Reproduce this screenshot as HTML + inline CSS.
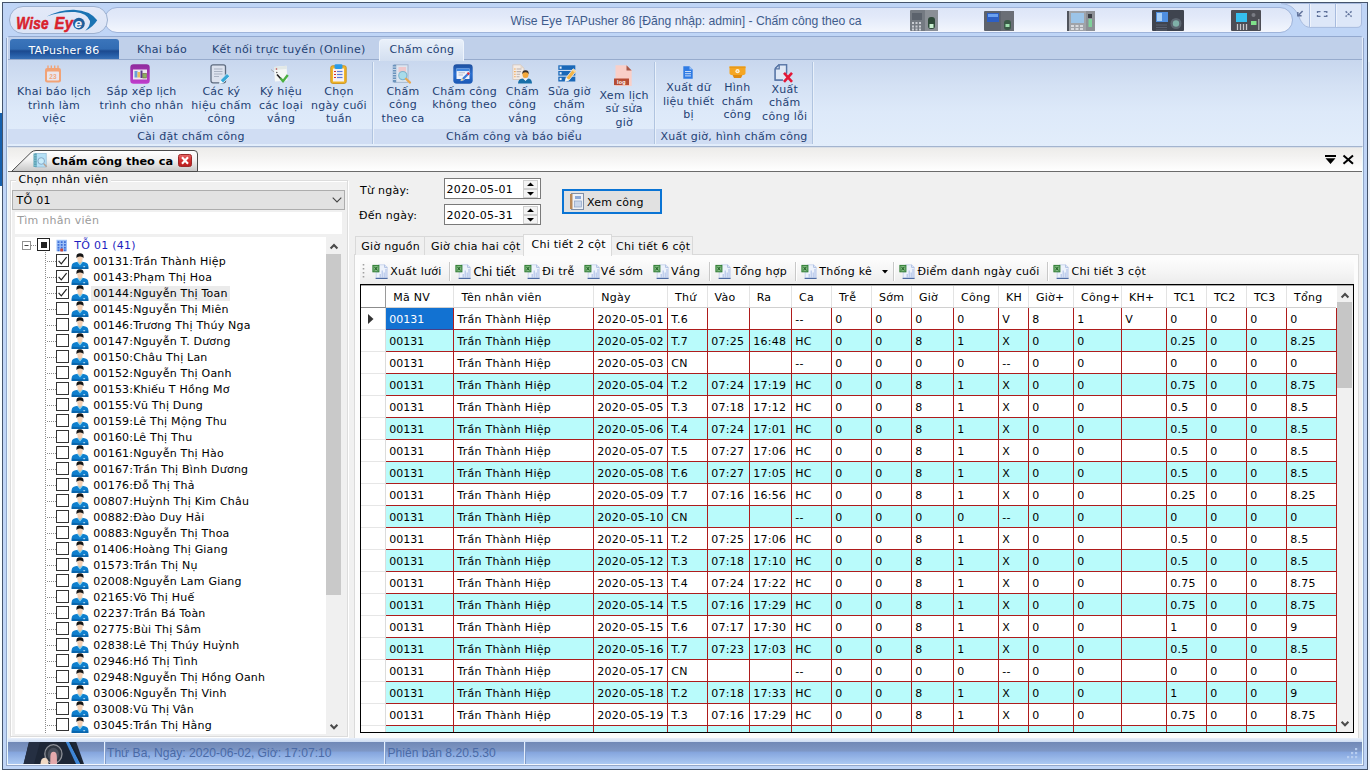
<!DOCTYPE html><html lang="vi"><head><meta charset="utf-8"><title>Wise Eye TAPusher 86</title><style>

*{box-sizing:border-box;margin:0;padding:0}
html,body{width:1370px;height:770px;overflow:hidden;background:#f8fefe}
body{position:relative;font-family:"DejaVu Sans", "Liberation Sans", sans-serif;font-size:11px;color:#000;line-height:14px;letter-spacing:0.26px}
.a{position:absolute}
.t{position:absolute;white-space:nowrap}
svg{position:absolute;overflow:visible}
#win{left:2px;top:2px;width:1366px;height:768px;border:1px solid #44546c;background:#bfd5f6}
#logo{left:9px;top:6px;width:99px;height:28px;border-radius:14px;border:1px solid #9db1d0;background:linear-gradient(#e3e9f8,#dce5f6)}
#title{left:104px;top:7px;width:1189px;height:26px;border-radius:13px;border:1px solid #9fb4da;background:linear-gradient(#dde5f7 0%,#e2e9f9 35%,#e9effb 65%,#f3f6fd 100%)}
#titletext{left:510.5px;top:13.5px;letter-spacing:0;font-family:"Liberation Sans",sans-serif;font-size:12.2px;color:#3f5c8c;line-height:14px}
#ribbon{left:7px;top:36px;width:1356px;height:111px;border:1px solid #e3edfa;border-top-color:#93a9cf;border-bottom-color:#a3b4cf;border-radius:3px 3px 0 0;background:#c0d0ea}
#rbody{left:8px;top:59px;width:1354px;height:87px;background:linear-gradient(#c8d7ee 0%,#d4e1f4 30%,#dde9f9 60%,#e2edfb 100%);border-top:1px solid #97abcd}
.rt{position:absolute;white-space:nowrap;color:#1e3f73;text-align:center;line-height:13.4px;transform:translateX(-50%)}
.gcap{position:absolute;height:15px;top:129px;background:#d0ddf3;color:#1e3f73;text-align:center;line-height:15.4px;white-space:nowrap}
.gsep{position:absolute;top:62px;width:2px;height:82px;border-left:1px solid #b0c4e0;border-right:1px solid #e8f0fa}
#content{left:8px;top:148px;width:1354px;height:590px;background:#f0f0f0}
#tabstrip{left:8px;top:147px;width:1354px;height:25px;background:linear-gradient(#c9d3e2 0,#edecea 1px,#f3f2f1 40%,#ffffff 100%);border-bottom:1px solid #6b6b6b}
#status{left:8px;top:742px;width:1354px;height:22px;background:linear-gradient(#7088b6 0%,#7e97c5 40%,#86a6de 48%,#abc9f2 100%)}
.st{letter-spacing:0;position:absolute;white-space:nowrap;font-family:"Liberation Sans",sans-serif;font-size:12.1px;color:#4a6aa6;top:746px;line-height:14px}

</style></head><body>
<div id="win" class="a"></div>
<div class="a" style="left:6px;top:38px;width:1358px;height:728px;border:1px solid #93a7c9;border-top:none"></div>
<div class="a" style="left:7px;top:38px;width:1356px;height:727px;border:1px solid #eafaff;border-top:none"></div>
<div class="a" style="left:0;top:113px;width:2px;height:73px;background:#1560ad"></div>
<div class="a" style="left:1368px;top:62px;width:2px;height:708px;background:#eef4fb"></div>
<div id="title" class="a"></div>
<div id="logo" class="a"></div>
<svg style="left:9px;top:6px" width="99" height="29" viewBox="9 6 99 29">
<path d="M46.8 16.6 Q60 9.4 74 9.7 Q90 10.4 97.2 20.3 Q93 27.2 85.3 30.8 Q90.6 25.5 90 21 Q87 13.2 75 12.1 Q60 11.4 46.8 16.6 Z" fill="#1a73b3"/>
<g font-family="'Liberation Sans',sans-serif" font-weight="bold" font-style="italic" font-size="17.3" fill="#d9222c" stroke="#d9222c" stroke-width="0.55" stroke-linejoin="round">
<text x="16.2" y="28.6" textLength="32.6" lengthAdjust="spacingAndGlyphs">Wise</text>
<text x="54.6" y="28.6" textLength="18.6" lengthAdjust="spacingAndGlyphs">Ey</text></g>
<circle cx="78.9" cy="23.6" r="5.9" fill="#1d5f9d"/>
<text x="74.6" y="27.6" font-family="'Liberation Sans',sans-serif" font-weight="bold" font-style="italic" font-size="13.5" fill="#eef3fb">e</text>
</svg>
<div id="titletext" class="t">Wise Eye TAPusher 86 [Đăng nhập: admin] - Chấm công theo ca</div>
<svg style="left:1275px;top:3px" width="90" height="28" viewBox="1275 3 90 28">
<path d="M1281 3.5 C1292 4.5 1296 10 1299 17 C1302 24 1305 27.4 1311 27.4 L1357 27.4 Q1361.5 27.4 1361.5 23 L1361.5 3.5 Z" fill="#dde7f8" stroke="#a7bbde" stroke-width="1"/>
<path d="M1309.5 4 V27 M1335.5 4 V27" stroke="#a7bbde" stroke-width="1"/><path d="M1310.5 4 V27 M1336.5 4 V27" stroke="#eef3fc" stroke-width="1"/>
<g stroke="#62749c" fill="none">
<path d="M1302.6 11 L1298.6 15" stroke-width="1.6"/><path d="M1297.8 12 V15.8 H1301.6" stroke-width="1.5"/>
<path d="M1317.5 13 V11.6 H1320.5 M1323.8 11.6 H1326.8 V13 M1326.8 15 V16.4 H1323.8 M1320.5 16.4 H1317.5 V15" stroke-width="1.3"/>
<path d="M1345.6 11.4 L1351.6 16.6 M1351.6 11.4 L1345.6 16.6" stroke-width="1.4" stroke-dasharray="2.2 1"/>
</g></svg>
<svg style="left:910px;top:10px" width="28" height="21" viewBox="0 0 28 21"><rect x="0" y="0" width="28" height="21" rx="1" fill="#747a82"/><rect x="2" y="3" width="10" height="7" fill="#5b626c"/><g fill="#c9ccd2"><rect x="2" y="12" width="2" height="2"/><rect x="5.5" y="12" width="2" height="2"/><rect x="9" y="12" width="2" height="2"/><rect x="2" y="15.5" width="2" height="2"/><rect x="5.5" y="15.5" width="2" height="2"/><rect x="9" y="15.5" width="2" height="2"/><rect x="2" y="18.5" width="2" height="2"/><rect x="5.5" y="18.5" width="2" height="2"/><rect x="9" y="18.5" width="2" height="2"/></g><rect x="15" y="0" width="13" height="21" fill="#8a8f96"/><rect x="18" y="7" width="7" height="12" rx="3" fill="#2f4a3a"/><rect x="19.5" y="14" width="4" height="4" fill="#c8f0d0"/></svg>
<svg style="left:984px;top:11px" width="30" height="20" viewBox="0 0 30 20"><rect x="0" y="0" width="30" height="20" rx="1" fill="#5d626c"/><rect x="3" y="2" width="12" height="9" fill="#2d5fc4"/><rect x="4" y="3" width="10" height="3" fill="#6aa0f0"/><rect x="17" y="0" width="13" height="20" fill="#6a6e76"/><rect x="20" y="9" width="7" height="10" rx="3" fill="#3a5a48"/><rect x="21.5" y="13" width="4" height="3" fill="#9fe0b0"/></svg>
<svg style="left:1067px;top:11px" width="28" height="20" viewBox="0 0 28 20"><rect x="0" y="0" width="28" height="20" rx="1" fill="#a0a3a9"/><rect x="0" y="0" width="2" height="20" fill="#50545c"/><rect x="4" y="2" width="13" height="10" fill="#9cc4e8"/><g fill="#d8dadf"><rect x="4" y="14" width="3" height="2"/><rect x="8.5" y="14" width="3" height="2"/><rect x="13" y="14" width="3" height="2"/><rect x="4" y="17" width="3" height="2"/><rect x="8.5" y="17" width="3" height="2"/><rect x="13" y="17" width="3" height="2"/></g><rect x="19" y="0" width="9" height="20" fill="#8d9096"/><rect x="21" y="3" width="4" height="4" fill="#3a3d44"/><rect x="21.5" y="8" width="3.5" height="8" fill="#7fd09a"/></svg>
<svg style="left:1152px;top:10px" width="32" height="21" viewBox="0 0 32 21"><rect x="0" y="0" width="32" height="21" rx="1" fill="#3f444f"/><rect x="4" y="2" width="12" height="10" fill="#4f8fe0"/><rect x="5" y="3" width="5" height="8" fill="#a8d0f8"/><circle cx="24" cy="13.5" r="5.5" fill="#5b6570"/><circle cx="24" cy="13.5" r="3.2" fill="#7fb0a8"/><g stroke="#5a6070" stroke-width="1"><path d="M4 15 H15 M4 17.5 H15 M4 20 H15"/></g></svg>
<svg style="left:1231px;top:10px" width="30" height="21" viewBox="0 0 30 21"><rect x="0" y="0" width="30" height="21" rx="1" fill="#4c4d54"/><rect x="5" y="3" width="11" height="9" fill="#35c0f0"/><g stroke="#c8c8cc" stroke-width="1.3"><path d="M6.5 14 V20 M9.5 14 V20 M12.5 14 V20 M15.5 14 V20"/></g><circle cx="22.5" cy="5" r="2" fill="#7a7c84"/><rect x="20" y="11" width="5.5" height="4" fill="#7fe08a"/><rect x="27" y="9" width="1.5" height="11" fill="#9a9ca2"/></svg>
<div id="ribbon" class="a"></div><div id="rbody" class="a"></div>
<div class="a" style="left:10px;top:39px;width:109px;height:20px;border-radius:3px 3px 0 0;background:linear-gradient(#3b75bb 0%,#326cb3 50%,#1c4a8f 60%,#245aa3 78%,#3870b6 100%)"></div>
<div class="t" style="left:28.4px;top:43.8px;color:#fff">TAPusher 86</div>
<div class="t" style="left:137px;top:43px;color:#1e3f73">Khai báo</div>
<div class="t" style="left:212px;top:43px;color:#1e3f73">Kết nối trực tuyến (Online)</div>
<div class="a" style="left:379px;top:39px;width:85px;height:22px;border-radius:4px 4px 0 0;background:linear-gradient(#e9f0fa,#d3dff0);border:1px solid #eef4fc;border-bottom:none"></div>
<div class="t" style="left:389.5px;top:43px;color:#1e3f73">Chấm công</div>
<div class="gcap" style="left:8px;width:364px;padding-left:2px">Cài đặt chấm công</div>
<div class="gcap" style="left:374px;width:280px">Chấm công và báo biểu</div>
<div class="gcap" style="left:656px;width:156px">Xuất giờ, hình chấm công</div>
<div class="gsep" style="left:372px"></div>
<div class="gsep" style="left:654px"></div>
<div class="gsep" style="left:812px"></div>
<div class="rt" style="left:54px;top:85.4px">Khai báo lịch<br>trình làm<br>việc</div>
<div class="rt" style="left:141.5px;top:85.4px">Sắp xếp lịch<br>trình cho nhân<br>viên</div>
<div class="rt" style="left:221.4px;top:85.4px">Các ký<br>hiệu chấm<br>công</div>
<div class="rt" style="left:281px;top:85.4px">Ký hiệu<br>các loại<br>vắng</div>
<div class="rt" style="left:339px;top:85.4px">Chọn<br>ngày cuối<br>tuần</div>
<div class="rt" style="left:403px;top:84.9px">Chấm<br>công<br>theo ca</div>
<div class="rt" style="left:464.6px;top:84.9px">Chấm công<br>không theo<br>ca</div>
<div class="rt" style="left:522.3px;top:84.9px">Chấm<br>công<br>vắng</div>
<div class="rt" style="left:569.3px;top:84.9px">Sửa giờ<br>chấm<br>công</div>
<div class="rt" style="left:624.2px;top:88.9px">Xem lịch<br>sử sửa<br>giờ</div>
<div class="rt" style="left:688.6px;top:81.4px">Xuất dữ<br>liệu thiết<br>bị</div>
<div class="rt" style="left:737.4px;top:81.10000000000001px">Hình<br>chấm<br>công</div>
<div class="rt" style="left:784.7px;top:82.9px">Xuất<br>chấm<br>công lỗi</div>
<svg style="left:44px;top:65px" width="18" height="18" viewBox="0 0 18 18"><rect x="1" y="3" width="16" height="14.5" rx="2.2" fill="#f1a377"/><rect x="3" y="6.5" width="12" height="9" rx="0.8" fill="#e9e6ee"/><g stroke="#f1a377" stroke-width="1.4"><path d="M4 0.5 V4 M7.3 0.5 V4 M10.7 0.5 V4 M14 0.5 V4"/></g><text x="9" y="13.8" font-size="6.5" font-family="'Liberation Sans',sans-serif" font-weight="bold" text-anchor="middle" fill="#f0a880">23</text></svg>
<svg style="left:130px;top:64px" width="20" height="20" viewBox="0 0 20 20"><defs><linearGradient id="pg" x1="0" y1="0" x2="0" y2="1"><stop offset="0" stop-color="#8f2c9c"/><stop offset="1" stop-color="#c03ccc"/></linearGradient></defs><rect x="0.3" y="0.3" width="19.4" height="19.4" rx="3.2" fill="url(#pg)"/><rect x="3" y="5.5" width="14" height="10" fill="#eee6f2"/><rect x="4.5" y="7" width="3" height="6.5" fill="#6a9fd8"/><rect x="7.5" y="8" width="2.5" height="5.5" fill="#e8c060"/><rect x="10.5" y="6.5" width="2" height="7.5" fill="#5a3a8a"/><rect x="12.8" y="9.5" width="3.5" height="4.5" fill="#8ab060" stroke="#6a5a3a" stroke-width="0.6"/></svg>
<svg style="left:210px;top:64px" width="20" height="20" viewBox="0 0 20 20"><rect x="1" y="0.8" width="14.5" height="18" rx="2" fill="#dce2ee" stroke="#5c6a7e" stroke-width="1.3"/><g stroke="#a9b2c2" stroke-width="1"><path d="M4 5 H12.5 M4 7.5 H12.5 M4 10 H12.5 M4 12.5 H9"/></g><path d="M9.5 19.5 L10.5 16 L17 9.5 L19.8 12.2 L13.2 18.7 Z" fill="#38a8d8" stroke="#e6f2fa" stroke-width="0.8"/><path d="M9.5 19.5 L10.5 16 L13.2 18.7 Z" fill="#f4f8fc"/></svg>
<svg style="left:270px;top:65px" width="20" height="18" viewBox="0 0 20 18"><path d="M4 2 L16.5 0.8 L17.5 15.5 L5 16.5 Z" fill="#f6f8f6"/><path d="M4 2 L16.5 0.8 L16.8 4 L4.2 5 Z" fill="#e2e8e6"/><path d="M1 4.5 L4 7" stroke="#999" stroke-width="0.8"/><circle cx="6.5" cy="4" r="0.8" fill="#c04040"/><circle cx="6.8" cy="7.5" r="0.8" fill="#555"/><path d="M7 9.5 L10.8 13.8" stroke="#222" stroke-width="1.6"/><path d="M10.5 13.2 L13 16.2 L17.8 10" fill="none" stroke="#4bb040" stroke-width="2.4"/></svg>
<svg style="left:330px;top:64px" width="17" height="20" viewBox="0 0 17 20"><rect x="0.8" y="1.8" width="15.4" height="17.6" rx="1.8" fill="#f0b62c" stroke="#c88c14" stroke-width="0.9"/><rect x="3" y="4.5" width="11" height="13" fill="#f6f2f6"/><rect x="4.5" y="0.3" width="8" height="4.6" rx="1.3" fill="#2a9ae8"/><g stroke-width="1.2"><path d="M4 7.5 H6" stroke="#d03030"/><path d="M7 7.5 H12.5" stroke="#5878d8"/><path d="M4 10.5 H6" stroke="#d03030"/><path d="M7 10.5 H12.5" stroke="#5878d8"/><path d="M4 13.5 H6" stroke="#d03030"/><path d="M7 13.5 H12.5" stroke="#5878d8"/></g></svg>
<svg style="left:392px;top:64px" width="20" height="20" viewBox="0 0 20 20"><rect x="2.5" y="0.8" width="13.5" height="17.5" fill="#dde5f0" stroke="#9fb2cc" stroke-width="0.9"/><rect x="0.8" y="0.8" width="3.4" height="17.5" fill="#6b93bd"/><g stroke="#dfe8f2" stroke-width="0.8"><path d="M0.8 3 H4.2 M0.8 5.5 H4.2 M0.8 8 H4.2 M0.8 10.5 H4.2 M0.8 13 H4.2 M0.8 15.5 H4.2"/></g><rect x="6.5" y="3" width="7.5" height="5" fill="#efc8cc"/><circle cx="10.8" cy="11.6" r="4.1" fill="#a8dcea" stroke="#7fb4cc" stroke-width="1.1"/><path d="M14 14.8 L18 18.6" stroke="#e8a850" stroke-width="2.2" stroke-linecap="round"/></svg>
<svg style="left:453px;top:64px" width="20" height="20" viewBox="0 0 20 20"><defs><linearGradient id="bg2" x1="0" y1="0" x2="0" y2="1"><stop offset="0" stop-color="#1e4f9e"/><stop offset="0.5" stop-color="#2a6fd0"/><stop offset="1" stop-color="#1b58b4"/></linearGradient></defs><rect x="0.3" y="0.3" width="19.4" height="19.4" rx="3.4" fill="url(#bg2)"/><rect x="3.5" y="4.5" width="13" height="10.5" fill="#f2f4fa"/><rect x="3.5" y="4.5" width="13" height="2.6" fill="#3f86e0"/><path d="M5.5 8.8 H12 M5.5 11 H10" stroke="#aab6cc" stroke-width="0.9"/><path d="M7.8 16.8 L9 14 L15.2 8 L17 9.8 L10.8 16 Z" fill="#3d7ad8" stroke="#fff" stroke-width="0.5"/><path d="M13.8 9.4 L15.2 8 L17 9.8 L15.6 11.2 Z" fill="#e03040"/><path d="M7.8 16.8 L9 14 L10.8 16 Z" fill="#f0d890"/></svg>
<svg style="left:511.5px;top:64px" width="20" height="20" viewBox="0 0 20 20"><path d="M0.8 0.8 H8.5 L12 4.2 V15.5 H0.8 Z" fill="#f4ece6" stroke="#cfc4bc" stroke-width="0.8"/><path d="M8.5 0.8 V4.2 H12" fill="#e2d6cc"/><g stroke-width="1.1"><path d="M2.2 5 H3.6 M2.2 7.6 H3.6 M2.2 10.2 H3.6 M2.2 12.8 H3.6" stroke="#f0a040"/><path d="M4.6 5 H9.5 M4.6 7.6 H9 M4.6 10.2 H8 M4.6 12.8 H7.5" stroke="#b8b0b0"/></g><path d="M6 19.6 Q6 15 10.5 14.4 L13.5 16.5 L16.5 14.4 Q20 15 20 19.6 Z" fill="#186fa8"/><path d="M11.5 14.5 L13.5 17 L15.5 14.5 Z" fill="#f4f4f4"/><ellipse cx="13.5" cy="10.6" rx="3" ry="3.5" fill="#f4a83a"/><path d="M10.3 10.2 Q10 6 13.5 6.2 Q17 6 16.7 10.2 Q16 8 13.5 8.2 Q11 8 10.3 10.2 Z" fill="#3a3028"/></svg>
<svg style="left:558px;top:65px" width="18" height="17" viewBox="0 0 18 17"><rect x="0.3" y="0.3" width="17" height="4.6" fill="#1a68b8"/><rect x="0.3" y="6" width="17" height="4.6" fill="#1a68b8"/><rect x="0.3" y="11.7" width="17" height="4.8" fill="#1a68b8"/><rect x="1.6" y="1.5" width="2" height="2.2" fill="#e8f0fa"/><rect x="1.6" y="7.2" width="2" height="2.2" fill="#e8f0fa"/><rect x="1.6" y="12.9" width="2" height="2.2" fill="#e8f0fa"/><path d="M7.2 16.4 L8.2 12.6 L15.2 3.8 L18.2 6.2 L11.2 15 Z" fill="#f3b548" stroke="#dce6f4" stroke-width="0.9"/><path d="M7.2 16.4 L8.2 12.6 L11.2 15 Z" fill="#f6f6f6"/><path d="M14 5.3 L15.2 3.8 L18.2 6.2 L17 7.7 Z" fill="#f8d8a0"/></svg>
<svg style="left:614px;top:64.5px" width="18" height="22" viewBox="0 0 18 22"><path d="M1.5 0.3 H12.5 L17.7 5.6 V21 H1.5 Z" fill="#f9cfc8"/><path d="M12.5 0.3 L17.7 5.6 H12.5 Z" fill="#a85848"/><rect x="0" y="13.5" width="15" height="6.6" fill="#b54c34"/><text x="7.5" y="18.6" font-size="5.4" font-family="'Liberation Sans',sans-serif" font-weight="bold" text-anchor="middle" fill="#fff">log</text></svg>
<svg style="left:682.5px;top:66px" width="10" height="13" viewBox="0 0 10 13"><path d="M0.3 0.3 H6.5 L9.7 3.5 V12.7 H0.3 Z" fill="#2f7be4"/><path d="M6.5 0.3 V3.5 H9.7 Z" fill="#9cc2f6"/><path d="M2 5.5 H8 M2 7.7 H8 M2 9.9 H8" stroke="#dbe8fb" stroke-width="0.9"/></svg>
<svg style="left:729px;top:66px" width="17" height="12" viewBox="0 0 17 12"><path d="M0.5 0.5 H16.5 V7 Q16.5 9 13.5 9 L3.5 9 Q0.5 9 0.5 7 Z" fill="#f5a623"/><path d="M3.5 9 L13.5 9 L12 12 H5 Z" fill="#e08a10"/><rect x="0.5" y="0.5" width="16" height="1.6" fill="#e89a1a"/><circle cx="8.5" cy="5.2" r="2.1" fill="#fdf2dc"/><circle cx="8.5" cy="5.2" r="0.9" fill="#f5c46a"/></svg>
<svg style="left:773.5px;top:64.3px" width="19" height="19" viewBox="0 0 19 19"><path d="M1.2 4.5 L5 0.8 H12.5 V9 M1.2 4.5 V16 H8.5" fill="none" stroke="#5876a6" stroke-width="1.4"/><path d="M1.2 4.5 L5 0.8 H12.5 V16 H1.2 Z" fill="#dfe8f6"/><path d="M1.2 4.5 L5 0.8 H12.5 V10 M1.2 4.5 V16 H9 M1.2 4.8 H5.2 V0.8" fill="none" stroke="#5876a6" stroke-width="1.3"/><path d="M10 8.8 L18 17.8 M18 8.8 L10 17.8" stroke="#e31837" stroke-width="2.6"/></svg>
<div id="content" class="a"></div><div id="tabstrip" class="a"></div>
<svg style="left:8px;top:148px" width="200" height="25" viewBox="8 148 200 25">
<defs><linearGradient id="dtg" x1="0" y1="0" x2="0" y2="1"><stop offset="0" stop-color="#ffffff"/><stop offset="0.45" stop-color="#f2f2f2"/><stop offset="1" stop-color="#c6c6c6"/></linearGradient></defs>
<path d="M11.5 171.5 L31 152.5 Q33 150.5 36 150.5 L194 150.5 Q197.5 150.5 197.5 154 L197.5 171.5 Z" fill="url(#dtg)" stroke="#4a4a4a" stroke-width="1"/>
</svg>
<svg style="left:33px;top:153px" width="15" height="15" viewBox="0 0 15 15"><rect x="2.6" y="0.4" width="10.6" height="13.6" fill="#b4e0f6" stroke="#8fb8d4" stroke-width="0.7"/><rect x="0.5" y="0.4" width="3.3" height="13.6" fill="#5fa5b8"/><path d="M0.5 2.5 H3.8 M0.5 5 H3.8 M0.5 7.5 H3.8 M0.5 10 H3.8 M0.5 12.5 H3.8" stroke="#8cc4d2" stroke-width="0.7"/><circle cx="8.2" cy="8" r="3.3" fill="#c8ecfa" stroke="#86a8c8" stroke-width="1"/><path d="M10.8 10.8 L13.6 13.8" stroke="#b8a090" stroke-width="1.5"/></svg>
<div class="t" style="left:51.8px;top:154.5px;font-weight:bold;font-size:11.3px;letter-spacing:0">Chấm công theo ca</div>
<svg style="left:178px;top:154px" width="14" height="13" viewBox="0 0 14 13"><defs><linearGradient id="cbg" x1="0" y1="0" x2="0" y2="1"><stop offset="0" stop-color="#e86a6a"/><stop offset="0.5" stop-color="#d22f2f"/><stop offset="1" stop-color="#b81e1e"/></linearGradient></defs>
<rect x="0.5" y="0.5" width="13" height="12" rx="2" fill="url(#cbg)" stroke="#9c2a2a"/><path d="M4 3.2 L10 9.8 M10 3.2 L4 9.8" stroke="#fff" stroke-width="2.1" stroke-linecap="butt"/></svg>
<div class="a" style="left:10px;top:180px;width:338px;height:557px;border:1px solid #dcdcdc;box-shadow:1px 1px 0 #fff, inset 1px 1px 0 #fff"></div>
<div class="t" style="left:16px;top:173px;background:#f0f0f0;padding:0 2.5px">Chọn nhân viên</div>
<div class="a" style="left:12px;top:190px;width:333px;height:20px;background:#e2e2e2;border:1px solid #adadad"></div>
<div class="t" style="left:16.5px;top:194px">TỖ 01</div>
<svg style="left:331.5px;top:197px" width="10" height="6" viewBox="0 0 10 6"><path d="M0.7 0.7 L5 5 L9.3 0.7" fill="none" stroke="#444" stroke-width="1.1"/></svg>
<div class="a" style="left:15px;top:212px;width:327px;height:22px;background:#fff"></div>
<div class="t" style="left:17.3px;top:213.5px;color:#9b9b9b">Tìm nhân viên</div>
<div class="a" style="left:15px;top:237px;width:328px;height:497px;background:#fff"></div>
<div class="a" style="left:326px;top:237px;width:17px;height:497px;background:#f0f0f0"></div>
<div class="a" style="left:326px;top:254px;width:15px;height:341px;background:#c9c9c9"></div>
<svg style="left:328.5px;top:243px" width="10" height="6" viewBox="0 0 10 6"><path d="M1.6 5.4 L5 2 L8.4 5.4" fill="none" stroke="#4a4a4a" stroke-width="2.1"/></svg>
<svg style="left:328.5px;top:723.5px" width="10" height="6" viewBox="0 0 10 6"><path d="M1.6 0.8 L5 4.2 L8.4 0.8" fill="none" stroke="#4a4a4a" stroke-width="2.1"/></svg>
<svg style="left:14px;top:237px" width="312" height="497" viewBox="14 237 312 497">
<defs><g id="pers"><path d="M-0.3 15.8 L-0.3 12.6 Q-0.1 9.8 3.4 9.2 L6 8.6 L8 10.4 L10 8.6 L12.6 9.2 Q16.1 9.8 16.3 12.6 L16.3 15.8 Z" fill="#0f7fce"/><path d="M-0.3 15.8 L-0.3 13.4 Q8 15 16.3 13.4 L16.3 15.8 Z" fill="#0a66ad"/><path d="M5.7 8.7 L8 11.6 L10.3 8.7" fill="none" stroke="#8fdcf2" stroke-width="1.1"/><path d="M6.3 7 L6.2 9 L8 10.8 L9.8 9 L9.7 7 Z" fill="#e9c2a4"/><ellipse cx="8" cy="5.3" rx="2.7" ry="3.6" fill="#f3d0b4"/><path d="M4.6 5.2 Q3.6 0.2 8 0.2 Q12.4 0.2 11.4 5.2 Q10.9 3.2 8 3.3 Q5.1 3.2 4.6 5.2 Z" fill="#151515"/><rect x="11.3" y="13.2" width="1.8" height="0.9" fill="#e8f6fc"/></g></g></defs>
<path d="M45.5 252 V734" stroke="#8a8a8a" stroke-width="1" stroke-dasharray="1 1" fill="none"/>
<path d="M31 245.5 H37" stroke="#8a8a8a" stroke-width="1" stroke-dasharray="1 1" fill="none"/>
<rect x="22.5" y="241.5" width="8" height="8" fill="#fff" stroke="#919191"/><path d="M24.5 245.5 H28.5" stroke="#444" stroke-width="1"/>
<rect x="37.5" y="238.5" width="12" height="12" fill="#fff" stroke="#222"/><rect x="41" y="242" width="6" height="6" fill="#222"/>
<g><rect x="56.5" y="239.8" width="10.5" height="11.5" fill="#9cc0f7"/><rect x="57.6" y="241.2" width="1.8" height="1.8" fill="#3f6fd8"/><rect x="57.6" y="244" width="1.8" height="1.8" fill="#3f6fd8"/><rect x="57.6" y="246.8" width="1.8" height="1.8" fill="#3f6fd8"/><rect x="57.6" y="249.4" width="1.8" height="1.8" fill="#3f6fd8"/><rect x="60.8" y="241.2" width="1.8" height="1.8" fill="#3f6fd8"/><rect x="60.8" y="244" width="1.8" height="1.8" fill="#3f6fd8"/><rect x="60.8" y="246.8" width="1.8" height="1.8" fill="#3f6fd8"/><rect x="60.8" y="249.4" width="1.8" height="1.8" fill="#3f6fd8"/><rect x="64" y="241.2" width="1.8" height="1.8" fill="#3f6fd8"/><rect x="64" y="244" width="1.8" height="1.8" fill="#3f6fd8"/><rect x="64" y="246.8" width="1.8" height="1.8" fill="#3f6fd8"/><rect x="64" y="249.4" width="1.8" height="1.8" fill="#3f6fd8"/><rect x="60.3" y="248.6" width="2.8" height="2.8" fill="#d0453a"/></g>
<path d="M47 261.5 H56" stroke="#8a8a8a" stroke-width="1" stroke-dasharray="1 1" fill="none"/>
<rect x="56.5" y="254.5" width="12" height="12" fill="#fff" stroke="#333"/>
<path d="M58.6 260.8 L61.3 263.9 L66.6 257.2" fill="none" stroke="#222" stroke-width="1.2"/>
<use href="#pers" x="72" y="253.1"/>
<path d="M47 277.5 H56" stroke="#8a8a8a" stroke-width="1" stroke-dasharray="1 1" fill="none"/>
<rect x="56.5" y="270.5" width="12" height="12" fill="#fff" stroke="#333"/>
<path d="M58.6 276.8 L61.3 279.9 L66.6 273.2" fill="none" stroke="#222" stroke-width="1.2"/>
<use href="#pers" x="72" y="269.1"/>
<path d="M47 293.5 H56" stroke="#8a8a8a" stroke-width="1" stroke-dasharray="1 1" fill="none"/>
<rect x="56.5" y="286.5" width="12" height="12" fill="#fff" stroke="#333"/>
<path d="M58.6 292.8 L61.3 295.9 L66.6 289.2" fill="none" stroke="#222" stroke-width="1.2"/>
<use href="#pers" x="72" y="285.1"/>
<path d="M47 309.5 H56" stroke="#8a8a8a" stroke-width="1" stroke-dasharray="1 1" fill="none"/>
<rect x="56.5" y="302.5" width="12" height="12" fill="#fff" stroke="#333"/>
<use href="#pers" x="72" y="301.1"/>
<path d="M47 325.5 H56" stroke="#8a8a8a" stroke-width="1" stroke-dasharray="1 1" fill="none"/>
<rect x="56.5" y="318.5" width="12" height="12" fill="#fff" stroke="#333"/>
<use href="#pers" x="72" y="317.1"/>
<path d="M47 341.5 H56" stroke="#8a8a8a" stroke-width="1" stroke-dasharray="1 1" fill="none"/>
<rect x="56.5" y="334.5" width="12" height="12" fill="#fff" stroke="#333"/>
<use href="#pers" x="72" y="333.1"/>
<path d="M47 357.5 H56" stroke="#8a8a8a" stroke-width="1" stroke-dasharray="1 1" fill="none"/>
<rect x="56.5" y="350.5" width="12" height="12" fill="#fff" stroke="#333"/>
<use href="#pers" x="72" y="349.1"/>
<path d="M47 373.5 H56" stroke="#8a8a8a" stroke-width="1" stroke-dasharray="1 1" fill="none"/>
<rect x="56.5" y="366.5" width="12" height="12" fill="#fff" stroke="#333"/>
<use href="#pers" x="72" y="365.1"/>
<path d="M47 389.5 H56" stroke="#8a8a8a" stroke-width="1" stroke-dasharray="1 1" fill="none"/>
<rect x="56.5" y="382.5" width="12" height="12" fill="#fff" stroke="#333"/>
<use href="#pers" x="72" y="381.1"/>
<path d="M47 405.5 H56" stroke="#8a8a8a" stroke-width="1" stroke-dasharray="1 1" fill="none"/>
<rect x="56.5" y="398.5" width="12" height="12" fill="#fff" stroke="#333"/>
<use href="#pers" x="72" y="397.1"/>
<path d="M47 421.5 H56" stroke="#8a8a8a" stroke-width="1" stroke-dasharray="1 1" fill="none"/>
<rect x="56.5" y="414.5" width="12" height="12" fill="#fff" stroke="#333"/>
<use href="#pers" x="72" y="413.1"/>
<path d="M47 437.5 H56" stroke="#8a8a8a" stroke-width="1" stroke-dasharray="1 1" fill="none"/>
<rect x="56.5" y="430.5" width="12" height="12" fill="#fff" stroke="#333"/>
<use href="#pers" x="72" y="429.1"/>
<path d="M47 453.5 H56" stroke="#8a8a8a" stroke-width="1" stroke-dasharray="1 1" fill="none"/>
<rect x="56.5" y="446.5" width="12" height="12" fill="#fff" stroke="#333"/>
<use href="#pers" x="72" y="445.1"/>
<path d="M47 469.5 H56" stroke="#8a8a8a" stroke-width="1" stroke-dasharray="1 1" fill="none"/>
<rect x="56.5" y="462.5" width="12" height="12" fill="#fff" stroke="#333"/>
<use href="#pers" x="72" y="461.1"/>
<path d="M47 485.5 H56" stroke="#8a8a8a" stroke-width="1" stroke-dasharray="1 1" fill="none"/>
<rect x="56.5" y="478.5" width="12" height="12" fill="#fff" stroke="#333"/>
<use href="#pers" x="72" y="477.1"/>
<path d="M47 501.5 H56" stroke="#8a8a8a" stroke-width="1" stroke-dasharray="1 1" fill="none"/>
<rect x="56.5" y="494.5" width="12" height="12" fill="#fff" stroke="#333"/>
<use href="#pers" x="72" y="493.1"/>
<path d="M47 517.5 H56" stroke="#8a8a8a" stroke-width="1" stroke-dasharray="1 1" fill="none"/>
<rect x="56.5" y="510.5" width="12" height="12" fill="#fff" stroke="#333"/>
<use href="#pers" x="72" y="509.1"/>
<path d="M47 533.5 H56" stroke="#8a8a8a" stroke-width="1" stroke-dasharray="1 1" fill="none"/>
<rect x="56.5" y="526.5" width="12" height="12" fill="#fff" stroke="#333"/>
<use href="#pers" x="72" y="525.1"/>
<path d="M47 549.5 H56" stroke="#8a8a8a" stroke-width="1" stroke-dasharray="1 1" fill="none"/>
<rect x="56.5" y="542.5" width="12" height="12" fill="#fff" stroke="#333"/>
<use href="#pers" x="72" y="541.1"/>
<path d="M47 565.5 H56" stroke="#8a8a8a" stroke-width="1" stroke-dasharray="1 1" fill="none"/>
<rect x="56.5" y="558.5" width="12" height="12" fill="#fff" stroke="#333"/>
<use href="#pers" x="72" y="557.1"/>
<path d="M47 581.5 H56" stroke="#8a8a8a" stroke-width="1" stroke-dasharray="1 1" fill="none"/>
<rect x="56.5" y="574.5" width="12" height="12" fill="#fff" stroke="#333"/>
<use href="#pers" x="72" y="573.1"/>
<path d="M47 597.5 H56" stroke="#8a8a8a" stroke-width="1" stroke-dasharray="1 1" fill="none"/>
<rect x="56.5" y="590.5" width="12" height="12" fill="#fff" stroke="#333"/>
<use href="#pers" x="72" y="589.1"/>
<path d="M47 613.5 H56" stroke="#8a8a8a" stroke-width="1" stroke-dasharray="1 1" fill="none"/>
<rect x="56.5" y="606.5" width="12" height="12" fill="#fff" stroke="#333"/>
<use href="#pers" x="72" y="605.1"/>
<path d="M47 629.5 H56" stroke="#8a8a8a" stroke-width="1" stroke-dasharray="1 1" fill="none"/>
<rect x="56.5" y="622.5" width="12" height="12" fill="#fff" stroke="#333"/>
<use href="#pers" x="72" y="621.1"/>
<path d="M47 645.5 H56" stroke="#8a8a8a" stroke-width="1" stroke-dasharray="1 1" fill="none"/>
<rect x="56.5" y="638.5" width="12" height="12" fill="#fff" stroke="#333"/>
<use href="#pers" x="72" y="637.1"/>
<path d="M47 661.5 H56" stroke="#8a8a8a" stroke-width="1" stroke-dasharray="1 1" fill="none"/>
<rect x="56.5" y="654.5" width="12" height="12" fill="#fff" stroke="#333"/>
<use href="#pers" x="72" y="653.1"/>
<path d="M47 677.5 H56" stroke="#8a8a8a" stroke-width="1" stroke-dasharray="1 1" fill="none"/>
<rect x="56.5" y="670.5" width="12" height="12" fill="#fff" stroke="#333"/>
<use href="#pers" x="72" y="669.1"/>
<path d="M47 693.5 H56" stroke="#8a8a8a" stroke-width="1" stroke-dasharray="1 1" fill="none"/>
<rect x="56.5" y="686.5" width="12" height="12" fill="#fff" stroke="#333"/>
<use href="#pers" x="72" y="685.1"/>
<path d="M47 709.5 H56" stroke="#8a8a8a" stroke-width="1" stroke-dasharray="1 1" fill="none"/>
<rect x="56.5" y="702.5" width="12" height="12" fill="#fff" stroke="#333"/>
<use href="#pers" x="72" y="701.1"/>
<path d="M47 725.5 H56" stroke="#8a8a8a" stroke-width="1" stroke-dasharray="1 1" fill="none"/>
<rect x="56.5" y="718.5" width="12" height="12" fill="#fff" stroke="#333"/>
<use href="#pers" x="72" y="717.1"/>
</svg>
<div class="a" style="left:91px;top:286px;width:139px;height:15px;background:#ebebeb"></div>
<div class="t" style="left:74.3px;top:239px;color:#1f1fbf">TỖ 01 (41)</div>
<div class="t" style="left:93.3px;top:255px;letter-spacing:0.2px">00131:Trần Thành Hiệp</div>
<div class="t" style="left:93.3px;top:271px;letter-spacing:0.2px">00143:Phạm Thị Hoa</div>
<div class="t" style="left:93.3px;top:287px;letter-spacing:0.2px">00144:Nguyễn Thị Toan</div>
<div class="t" style="left:93.3px;top:303px;letter-spacing:0.2px">00145:Nguyễn Thị Miên</div>
<div class="t" style="left:93.3px;top:319px;letter-spacing:0.2px">00146:Trương Thị Thúy Nga</div>
<div class="t" style="left:93.3px;top:335px;letter-spacing:0.2px">00147:Nguyễn T. Dương</div>
<div class="t" style="left:93.3px;top:351px;letter-spacing:0.2px">00150:Châu Thị Lan</div>
<div class="t" style="left:93.3px;top:367px;letter-spacing:0.2px">00152:Nguyễn Thị Oanh</div>
<div class="t" style="left:93.3px;top:383px;letter-spacing:0.2px">00153:Khiếu T Hồng Mơ</div>
<div class="t" style="left:93.3px;top:399px;letter-spacing:0.2px">00155:Vũ Thị Dung</div>
<div class="t" style="left:93.3px;top:415px;letter-spacing:0.2px">00159:Lê Thị Mộng Thu</div>
<div class="t" style="left:93.3px;top:431px;letter-spacing:0.2px">00160:Lê Thị Thu</div>
<div class="t" style="left:93.3px;top:447px;letter-spacing:0.2px">00161:Nguyễn Thị Hào</div>
<div class="t" style="left:93.3px;top:463px;letter-spacing:0.2px">00167:Trần Thị Bình Dương</div>
<div class="t" style="left:93.3px;top:479px;letter-spacing:0.2px">00176:Đỗ Thị Thả</div>
<div class="t" style="left:93.3px;top:495px;letter-spacing:0.2px">00807:Huỳnh Thị Kim Châu</div>
<div class="t" style="left:93.3px;top:511px;letter-spacing:0.2px">00882:Đào Duy Hải</div>
<div class="t" style="left:93.3px;top:527px;letter-spacing:0.2px">00883:Nguyễn Thị Thoa</div>
<div class="t" style="left:93.3px;top:543px;letter-spacing:0.2px">01406:Hoàng Thị Giang</div>
<div class="t" style="left:93.3px;top:559px;letter-spacing:0.2px">01573:Trần Thị Nụ</div>
<div class="t" style="left:93.3px;top:575px;letter-spacing:0.2px">02008:Nguyễn Lam Giang</div>
<div class="t" style="left:93.3px;top:591px;letter-spacing:0.2px">02165:Võ Thị Huế</div>
<div class="t" style="left:93.3px;top:607px;letter-spacing:0.2px">02237:Trần Bá Toàn</div>
<div class="t" style="left:93.3px;top:623px;letter-spacing:0.2px">02775:Bùi Thị Sâm</div>
<div class="t" style="left:93.3px;top:639px;letter-spacing:0.2px">02838:Lê Thị Thúy Huỳnh</div>
<div class="t" style="left:93.3px;top:655px;letter-spacing:0.2px">02946:Hồ Thị Tình</div>
<div class="t" style="left:93.3px;top:671px;letter-spacing:0.2px">02948:Nguyễn Thị Hồng Oanh</div>
<div class="t" style="left:93.3px;top:687px;letter-spacing:0.2px">03006:Nguyễn Thị Vinh</div>
<div class="t" style="left:93.3px;top:703px;letter-spacing:0.2px">03008:Vũ Thị Vân</div>
<div class="t" style="left:93.3px;top:719px;letter-spacing:0.2px">03045:Trần Thị Hằng</div>
<svg style="left:1325px;top:155px" width="30" height="10" viewBox="1325 155 30 10"><path d="M1325 155 H1336 V157 H1325 Z M1325.5 158.2 H1335.5 L1330.5 164 Z" fill="#000"/><path d="M1343.5 155.5 L1353 163.8 M1353 155.5 L1343.5 163.8" stroke="#000" stroke-width="2"/></svg>
<div class="t" style="left:360px;top:184px">Từ ngày:</div>
<div class="t" style="left:359px;top:208.5px">Đến ngày:</div>
<div class="a" style="left:444px;top:178px;width:97px;height:21px;background:#fff;border:1px solid #7a7a7a"></div>
<div class="t" style="left:446.5px;top:182.8px">2020-05-01</div>
<div class="a" style="left:523px;top:180px;width:15px;height:9px;background:#f3f3f3;border:1px solid #cfcfcf"></div>
<div class="a" style="left:523px;top:189px;width:15px;height:9px;background:#f3f3f3;border:1px solid #cfcfcf"></div>
<svg style="left:527px;top:182px" width="7" height="14" viewBox="0 0 7 14"><path d="M0 4 L3.5 0.5 L7 4 Z M0 10 L3.5 13.5 L7 10 Z" fill="#000"/></svg>
<div class="a" style="left:444px;top:204px;width:97px;height:21px;background:#fff;border:1px solid #7a7a7a"></div>
<div class="t" style="left:446.5px;top:208.8px">2020-05-31</div>
<div class="a" style="left:523px;top:206px;width:15px;height:9px;background:#f3f3f3;border:1px solid #cfcfcf"></div>
<div class="a" style="left:523px;top:215px;width:15px;height:9px;background:#f3f3f3;border:1px solid #cfcfcf"></div>
<svg style="left:527px;top:208px" width="7" height="14" viewBox="0 0 7 14"><path d="M0 4 L3.5 0.5 L7 4 Z M0 10 L3.5 13.5 L7 10 Z" fill="#000"/></svg>
<div class="a" style="left:562px;top:189px;width:100px;height:25px;background:#e1e1e1;border:2px solid #0a74d4"></div>
<div class="t" style="left:587px;top:196px">Xem công</div>
<svg style="left:569px;top:193px" width="16" height="17" viewBox="0 0 16 17"><rect x="2.5" y="0.5" width="12" height="16" fill="#eef1f6" stroke="#7f8fa8"/><rect x="1" y="1" width="2.5" height="15" fill="#b98a5a"/><rect x="6" y="3" width="6" height="3" fill="#8aa8d8"/><rect x="5.5" y="8" width="7" height="6" fill="#c9d6ea" stroke="#8aa0c4" stroke-width="0.7"/></svg>
<div class="a" style="left:354px;top:254px;width:1005px;height:484px;background:#fcfcfc;border:1px solid #dadada;border-bottom:none"></div>
<div class="a" style="left:355px;top:236px;width:70px;height:19px;background:#f0f0f0;border:1px solid #d9d9d9;border-bottom:none"></div>
<div class="t" style="left:361.3px;top:240px">Giờ nguồn</div>
<div class="a" style="left:424px;top:236px;width:100px;height:19px;background:#f0f0f0;border:1px solid #d9d9d9;border-bottom:none"></div>
<div class="t" style="left:431px;top:240px">Giờ chia hai cột</div>
<div class="a" style="left:611px;top:236px;width:82px;height:19px;background:#f0f0f0;border:1px solid #d9d9d9;border-bottom:none"></div>
<div class="t" style="left:616px;top:240px">Chi tiết 6 cột</div>
<div class="a" style="left:523px;top:234px;width:89px;height:22px;background:#fbfbfb;border:1px solid #dadada;border-bottom:none"></div>
<div class="t" style="left:531.5px;top:238px">Chi tiết 2 cột</div>
<div class="a" style="left:360px;top:259px;width:994px;height:25px;background:linear-gradient(#fcfcfc 0%,#f6f6f6 45%,#ececec 100%);border-radius:0 5px 0 0"></div>
<svg style="left:362px;top:263px" width="3" height="18" viewBox="0 0 3 18"><path d="M1.5 1 V17" stroke="#a0a0a0" stroke-width="1.6" stroke-dasharray="1.5 2.5"/></svg>
<svg width="0" height="0" style="left:0;top:0"><defs><g id="xl"><path d="M6.5 1.8 H12.6 L15.3 4.4 V15 H4.2 V9 H6.5 Z" fill="#edf2fb" stroke="#c3d1ec" stroke-width="0.8"/><path d="M12.6 1.8 V4.4 H15.3" fill="none" stroke="#9fb4dc" stroke-width="0.8"/><path d="M8.2 14.5 V11 M10.2 14.5 V7.5 M12.2 14.5 V9.5 M14 14.5 V6" stroke="#b3c5ea" stroke-width="1.2"/><path d="M3.6 15.4 H15.6" stroke="#46659f" stroke-width="1.1"/><rect x="0.9" y="2.4" width="6" height="6.4" fill="#7fb97f" stroke="#2f7d33" stroke-width="1"/><path d="M2.4 3.8 L5.4 7.4 M5.4 3.8 L2.4 7.4" stroke="#1b5e20" stroke-width="1"/></g></defs></svg>
<svg style="left:371.5px;top:263px" width="16" height="17" viewBox="0 0 16 17"><use href="#xl"/></svg>
<div class="t" style="left:390.3px;top:264.5px">Xuất lưới</div>
<svg style="left:455.3px;top:263px" width="16" height="17" viewBox="0 0 16 17"><use href="#xl"/></svg>
<div class="t" style="left:473.4px;top:263.8px;font-family:'DejaVu Sans Condensed','Liberation Sans',sans-serif;font-size:13px;line-height:15px;letter-spacing:0">Chi tiết</div>
<svg style="left:524px;top:263px" width="16" height="17" viewBox="0 0 16 17"><use href="#xl"/></svg>
<div class="t" style="left:542.3px;top:264.5px">Đi trễ</div>
<svg style="left:583.5px;top:263px" width="16" height="17" viewBox="0 0 16 17"><use href="#xl"/></svg>
<div class="t" style="left:600.7px;top:264.5px">Về sớm</div>
<svg style="left:653px;top:263px" width="16" height="17" viewBox="0 0 16 17"><use href="#xl"/></svg>
<div class="t" style="left:671px;top:264.5px">Vắng</div>
<svg style="left:714.7px;top:263px" width="16" height="17" viewBox="0 0 16 17"><use href="#xl"/></svg>
<div class="t" style="left:733.4px;top:264.5px">Tổng hợp</div>
<svg style="left:801px;top:263px" width="16" height="17" viewBox="0 0 16 17"><use href="#xl"/></svg>
<div class="t" style="left:819.3px;top:264.5px">Thống kê</div>
<svg style="left:898.8px;top:263px" width="16" height="17" viewBox="0 0 16 17"><use href="#xl"/></svg>
<div class="t" style="left:917.4px;top:264.5px">Điểm danh ngày cuối</div>
<svg style="left:1052.6px;top:263px" width="16" height="17" viewBox="0 0 16 17"><use href="#xl"/></svg>
<div class="t" style="left:1071.6px;top:264.5px">Chi tiết 3 cột</div>
<div class="a" style="left:449px;top:262px;width:2px;height:19px;border-left:1px solid #c8c8c8;border-right:1px solid #fff"></div>
<div class="a" style="left:709px;top:262px;width:2px;height:19px;border-left:1px solid #c8c8c8;border-right:1px solid #fff"></div>
<div class="a" style="left:795px;top:262px;width:2px;height:19px;border-left:1px solid #c8c8c8;border-right:1px solid #fff"></div>
<div class="a" style="left:893px;top:262px;width:2px;height:19px;border-left:1px solid #c8c8c8;border-right:1px solid #fff"></div>
<div class="a" style="left:1047px;top:262px;width:2px;height:19px;border-left:1px solid #c8c8c8;border-right:1px solid #fff"></div>
<svg style="left:882px;top:269.5px" width="6" height="4" viewBox="0 0 6 4"><path d="M0 0 H6 L3 3.5 Z" fill="#000"/></svg>
<div class="a" style="left:360px;top:284px;width:994px;height:449px;background:#fff;border:1px solid #000;box-shadow:inset 0 0.5px 0 #555"></div>
<svg style="left:361px;top:286px" width="992" height="446" viewBox="361 286 992 446"><rect x="386" y="330" width="950" height="22" fill="#b9fbfb"/><rect x="386" y="374" width="950" height="22" fill="#b9fbfb"/><rect x="386" y="418" width="950" height="22" fill="#b9fbfb"/><rect x="386" y="462" width="950" height="22" fill="#b9fbfb"/><rect x="386" y="506" width="950" height="22" fill="#b9fbfb"/><rect x="386" y="550" width="950" height="22" fill="#b9fbfb"/><rect x="386" y="594" width="950" height="22" fill="#b9fbfb"/><rect x="386" y="638" width="950" height="22" fill="#b9fbfb"/><rect x="386" y="682" width="950" height="22" fill="#b9fbfb"/><rect x="386" y="726" width="950" height="6" fill="#b9fbfb"/><rect x="386" y="308" width="67" height="21" fill="#1272d2"/><path d="M385.5 286 V307" stroke="#e3e3e3" stroke-width="1"/><path d="M453.5 286 V307" stroke="#e3e3e3" stroke-width="1"/><path d="M593.5 286 V307" stroke="#e3e3e3" stroke-width="1"/><path d="M667.5 286 V307" stroke="#e3e3e3" stroke-width="1"/><path d="M707.5 286 V307" stroke="#e3e3e3" stroke-width="1"/><path d="M749.5 286 V307" stroke="#e3e3e3" stroke-width="1"/><path d="M791.5 286 V307" stroke="#e3e3e3" stroke-width="1"/><path d="M831.5 286 V307" stroke="#e3e3e3" stroke-width="1"/><path d="M871.5 286 V307" stroke="#e3e3e3" stroke-width="1"/><path d="M911.5 286 V307" stroke="#e3e3e3" stroke-width="1"/><path d="M953.5 286 V307" stroke="#e3e3e3" stroke-width="1"/><path d="M998.5 286 V307" stroke="#e3e3e3" stroke-width="1"/><path d="M1028.5 286 V307" stroke="#e3e3e3" stroke-width="1"/><path d="M1073.5 286 V307" stroke="#e3e3e3" stroke-width="1"/><path d="M1121.5 286 V307" stroke="#e3e3e3" stroke-width="1"/><path d="M1166.5 286 V307" stroke="#e3e3e3" stroke-width="1"/><path d="M1206.5 286 V307" stroke="#e3e3e3" stroke-width="1"/><path d="M1246.5 286 V307" stroke="#e3e3e3" stroke-width="1"/><path d="M1286.5 286 V307" stroke="#e3e3e3" stroke-width="1"/><path d="M386 307.5 H1336" stroke="#d0d0d0" stroke-width="1"/><path d="M361 307.5 H386" stroke="#8c8c8c" stroke-width="1"/><path d="M385.5 286 V307" stroke="#9a9a9a" stroke-width="1"/><path d="M361 329.5 H385" stroke="#e6e6e6" stroke-width="1"/><path d="M361 351.5 H385" stroke="#e6e6e6" stroke-width="1"/><path d="M361 373.5 H385" stroke="#e6e6e6" stroke-width="1"/><path d="M361 395.5 H385" stroke="#e6e6e6" stroke-width="1"/><path d="M361 417.5 H385" stroke="#e6e6e6" stroke-width="1"/><path d="M361 439.5 H385" stroke="#e6e6e6" stroke-width="1"/><path d="M361 461.5 H385" stroke="#e6e6e6" stroke-width="1"/><path d="M361 483.5 H385" stroke="#e6e6e6" stroke-width="1"/><path d="M361 505.5 H385" stroke="#e6e6e6" stroke-width="1"/><path d="M361 527.5 H385" stroke="#e6e6e6" stroke-width="1"/><path d="M361 549.5 H385" stroke="#e6e6e6" stroke-width="1"/><path d="M361 571.5 H385" stroke="#e6e6e6" stroke-width="1"/><path d="M361 593.5 H385" stroke="#e6e6e6" stroke-width="1"/><path d="M361 615.5 H385" stroke="#e6e6e6" stroke-width="1"/><path d="M361 637.5 H385" stroke="#e6e6e6" stroke-width="1"/><path d="M361 659.5 H385" stroke="#e6e6e6" stroke-width="1"/><path d="M361 681.5 H385" stroke="#e6e6e6" stroke-width="1"/><path d="M361 703.5 H385" stroke="#e6e6e6" stroke-width="1"/><path d="M361 725.5 H385" stroke="#e6e6e6" stroke-width="1"/><path d="M385.5 308 V732" stroke="#dcdcdc" stroke-width="1"/><path d="M386 329.5 H1336" stroke="#ae1c1c" stroke-width="1"/><path d="M386 351.5 H1336" stroke="#ae1c1c" stroke-width="1"/><path d="M386 373.5 H1336" stroke="#ae1c1c" stroke-width="1"/><path d="M386 395.5 H1336" stroke="#ae1c1c" stroke-width="1"/><path d="M386 417.5 H1336" stroke="#ae1c1c" stroke-width="1"/><path d="M386 439.5 H1336" stroke="#ae1c1c" stroke-width="1"/><path d="M386 461.5 H1336" stroke="#ae1c1c" stroke-width="1"/><path d="M386 483.5 H1336" stroke="#ae1c1c" stroke-width="1"/><path d="M386 505.5 H1336" stroke="#ae1c1c" stroke-width="1"/><path d="M386 527.5 H1336" stroke="#ae1c1c" stroke-width="1"/><path d="M386 549.5 H1336" stroke="#ae1c1c" stroke-width="1"/><path d="M386 571.5 H1336" stroke="#ae1c1c" stroke-width="1"/><path d="M386 593.5 H1336" stroke="#ae1c1c" stroke-width="1"/><path d="M386 615.5 H1336" stroke="#ae1c1c" stroke-width="1"/><path d="M386 637.5 H1336" stroke="#ae1c1c" stroke-width="1"/><path d="M386 659.5 H1336" stroke="#ae1c1c" stroke-width="1"/><path d="M386 681.5 H1336" stroke="#ae1c1c" stroke-width="1"/><path d="M386 703.5 H1336" stroke="#ae1c1c" stroke-width="1"/><path d="M386 725.5 H1336" stroke="#ae1c1c" stroke-width="1"/><path d="M453.5 308 V732" stroke="#ae1c1c" stroke-width="1"/><path d="M593.5 308 V732" stroke="#ae1c1c" stroke-width="1"/><path d="M667.5 308 V732" stroke="#ae1c1c" stroke-width="1"/><path d="M707.5 308 V732" stroke="#ae1c1c" stroke-width="1"/><path d="M749.5 308 V732" stroke="#ae1c1c" stroke-width="1"/><path d="M791.5 308 V732" stroke="#ae1c1c" stroke-width="1"/><path d="M831.5 308 V732" stroke="#ae1c1c" stroke-width="1"/><path d="M871.5 308 V732" stroke="#ae1c1c" stroke-width="1"/><path d="M911.5 308 V732" stroke="#ae1c1c" stroke-width="1"/><path d="M953.5 308 V732" stroke="#ae1c1c" stroke-width="1"/><path d="M998.5 308 V732" stroke="#ae1c1c" stroke-width="1"/><path d="M1028.5 308 V732" stroke="#ae1c1c" stroke-width="1"/><path d="M1073.5 308 V732" stroke="#ae1c1c" stroke-width="1"/><path d="M1121.5 308 V732" stroke="#ae1c1c" stroke-width="1"/><path d="M1166.5 308 V732" stroke="#ae1c1c" stroke-width="1"/><path d="M1206.5 308 V732" stroke="#ae1c1c" stroke-width="1"/><path d="M1246.5 308 V732" stroke="#ae1c1c" stroke-width="1"/><path d="M1286.5 308 V732" stroke="#ae1c1c" stroke-width="1"/><path d="M1336.5 308 V732" stroke="#ae1c1c" stroke-width="1"/><path d="M386 329.5 H453" stroke="#4b3f86" stroke-width="1"/><path d="M368 314 L373.5 319 L368 324 Z" fill="#333"/></svg>
<div class="a" style="left:1337px;top:286px;width:16px;height:446px;background:#f0f0f0"></div>
<div class="a" style="left:1337px;top:302px;width:15px;height:86px;background:#c6c6c6"></div>
<svg style="left:1340px;top:291.5px" width="10" height="6" viewBox="0 0 10 6"><path d="M1.6 5.4 L5 2 L8.4 5.4" fill="none" stroke="#4a4a4a" stroke-width="2.1"/></svg>
<svg style="left:1340px;top:721px" width="10" height="6" viewBox="0 0 10 6"><path d="M1.6 0.8 L5 4.2 L8.4 0.8" fill="none" stroke="#4a4a4a" stroke-width="2.1"/></svg>
<div class="t" style="left:393.3px;top:291px">Mã NV</div>
<div class="t" style="left:461.5px;top:291px">Tên nhân viên</div>
<div class="t" style="left:601.3px;top:291px">Ngày</div>
<div class="t" style="left:675px;top:291px">Thứ</div>
<div class="t" style="left:714.5px;top:291px">Vào</div>
<div class="t" style="left:756.7px;top:291px">Ra</div>
<div class="t" style="left:799px;top:291px">Ca</div>
<div class="t" style="left:839px;top:291px">Trễ</div>
<div class="t" style="left:879px;top:291px">Sớm</div>
<div class="t" style="left:919px;top:291px">Giờ</div>
<div class="t" style="left:961px;top:291px">Công</div>
<div class="t" style="left:1006px;top:291px">KH</div>
<div class="t" style="left:1036px;top:291px">Giờ+</div>
<div class="t" style="left:1081px;top:291px">Công+</div>
<div class="t" style="left:1129px;top:291px">KH+</div>
<div class="t" style="left:1174px;top:291px">TC1</div>
<div class="t" style="left:1214px;top:291px">TC2</div>
<div class="t" style="left:1254px;top:291px">TC3</div>
<div class="t" style="left:1294px;top:291px">Tổng</div>
<div class="t" style="left:389.3px;top:313px;color:#fff;letter-spacing:0">00131</div>
<div class="t" style="left:457.3px;top:313px">Trần Thành Hiệp</div>
<div class="t" style="left:597.3px;top:313px">2020-05-01</div>
<div class="t" style="left:671.3px;top:313px">T.6</div>
<div class="t" style="left:795.3px;top:313px">--</div>
<div class="t" style="left:835.3px;top:313px">0</div>
<div class="t" style="left:875.3px;top:313px">0</div>
<div class="t" style="left:915.3px;top:313px">0</div>
<div class="t" style="left:957.3px;top:313px">0</div>
<div class="t" style="left:1002.3px;top:313px">V</div>
<div class="t" style="left:1032.3px;top:313px">8</div>
<div class="t" style="left:1077.3px;top:313px">1</div>
<div class="t" style="left:1125.3px;top:313px">V</div>
<div class="t" style="left:1170.3px;top:313px">0</div>
<div class="t" style="left:1210.3px;top:313px">0</div>
<div class="t" style="left:1250.3px;top:313px">0</div>
<div class="t" style="left:1290.3px;top:313px">0</div>
<div class="t" style="left:389.3px;top:335px;letter-spacing:0">00131</div>
<div class="t" style="left:457.3px;top:335px">Trần Thành Hiệp</div>
<div class="t" style="left:597.3px;top:335px">2020-05-02</div>
<div class="t" style="left:671.3px;top:335px">T.7</div>
<div class="t" style="left:711.3px;top:335px">07:25</div>
<div class="t" style="left:753.3px;top:335px">16:48</div>
<div class="t" style="left:795.3px;top:335px">HC</div>
<div class="t" style="left:835.3px;top:335px">0</div>
<div class="t" style="left:875.3px;top:335px">0</div>
<div class="t" style="left:915.3px;top:335px">8</div>
<div class="t" style="left:957.3px;top:335px">1</div>
<div class="t" style="left:1002.3px;top:335px">X</div>
<div class="t" style="left:1032.3px;top:335px">0</div>
<div class="t" style="left:1077.3px;top:335px">0</div>
<div class="t" style="left:1170.3px;top:335px">0.25</div>
<div class="t" style="left:1210.3px;top:335px">0</div>
<div class="t" style="left:1250.3px;top:335px">0</div>
<div class="t" style="left:1290.3px;top:335px">8.25</div>
<div class="t" style="left:389.3px;top:357px;letter-spacing:0">00131</div>
<div class="t" style="left:457.3px;top:357px">Trần Thành Hiệp</div>
<div class="t" style="left:597.3px;top:357px">2020-05-03</div>
<div class="t" style="left:671.3px;top:357px">CN</div>
<div class="t" style="left:795.3px;top:357px">--</div>
<div class="t" style="left:835.3px;top:357px">0</div>
<div class="t" style="left:875.3px;top:357px">0</div>
<div class="t" style="left:915.3px;top:357px">0</div>
<div class="t" style="left:957.3px;top:357px">0</div>
<div class="t" style="left:1002.3px;top:357px">--</div>
<div class="t" style="left:1032.3px;top:357px">0</div>
<div class="t" style="left:1077.3px;top:357px">0</div>
<div class="t" style="left:1170.3px;top:357px">0</div>
<div class="t" style="left:1210.3px;top:357px">0</div>
<div class="t" style="left:1250.3px;top:357px">0</div>
<div class="t" style="left:1290.3px;top:357px">0</div>
<div class="t" style="left:389.3px;top:379px;letter-spacing:0">00131</div>
<div class="t" style="left:457.3px;top:379px">Trần Thành Hiệp</div>
<div class="t" style="left:597.3px;top:379px">2020-05-04</div>
<div class="t" style="left:671.3px;top:379px">T.2</div>
<div class="t" style="left:711.3px;top:379px">07:24</div>
<div class="t" style="left:753.3px;top:379px">17:19</div>
<div class="t" style="left:795.3px;top:379px">HC</div>
<div class="t" style="left:835.3px;top:379px">0</div>
<div class="t" style="left:875.3px;top:379px">0</div>
<div class="t" style="left:915.3px;top:379px">8</div>
<div class="t" style="left:957.3px;top:379px">1</div>
<div class="t" style="left:1002.3px;top:379px">X</div>
<div class="t" style="left:1032.3px;top:379px">0</div>
<div class="t" style="left:1077.3px;top:379px">0</div>
<div class="t" style="left:1170.3px;top:379px">0.75</div>
<div class="t" style="left:1210.3px;top:379px">0</div>
<div class="t" style="left:1250.3px;top:379px">0</div>
<div class="t" style="left:1290.3px;top:379px">8.75</div>
<div class="t" style="left:389.3px;top:401px;letter-spacing:0">00131</div>
<div class="t" style="left:457.3px;top:401px">Trần Thành Hiệp</div>
<div class="t" style="left:597.3px;top:401px">2020-05-05</div>
<div class="t" style="left:671.3px;top:401px">T.3</div>
<div class="t" style="left:711.3px;top:401px">07:18</div>
<div class="t" style="left:753.3px;top:401px">17:12</div>
<div class="t" style="left:795.3px;top:401px">HC</div>
<div class="t" style="left:835.3px;top:401px">0</div>
<div class="t" style="left:875.3px;top:401px">0</div>
<div class="t" style="left:915.3px;top:401px">8</div>
<div class="t" style="left:957.3px;top:401px">1</div>
<div class="t" style="left:1002.3px;top:401px">X</div>
<div class="t" style="left:1032.3px;top:401px">0</div>
<div class="t" style="left:1077.3px;top:401px">0</div>
<div class="t" style="left:1170.3px;top:401px">0.5</div>
<div class="t" style="left:1210.3px;top:401px">0</div>
<div class="t" style="left:1250.3px;top:401px">0</div>
<div class="t" style="left:1290.3px;top:401px">8.5</div>
<div class="t" style="left:389.3px;top:423px;letter-spacing:0">00131</div>
<div class="t" style="left:457.3px;top:423px">Trần Thành Hiệp</div>
<div class="t" style="left:597.3px;top:423px">2020-05-06</div>
<div class="t" style="left:671.3px;top:423px">T.4</div>
<div class="t" style="left:711.3px;top:423px">07:24</div>
<div class="t" style="left:753.3px;top:423px">17:01</div>
<div class="t" style="left:795.3px;top:423px">HC</div>
<div class="t" style="left:835.3px;top:423px">0</div>
<div class="t" style="left:875.3px;top:423px">0</div>
<div class="t" style="left:915.3px;top:423px">8</div>
<div class="t" style="left:957.3px;top:423px">1</div>
<div class="t" style="left:1002.3px;top:423px">X</div>
<div class="t" style="left:1032.3px;top:423px">0</div>
<div class="t" style="left:1077.3px;top:423px">0</div>
<div class="t" style="left:1170.3px;top:423px">0.5</div>
<div class="t" style="left:1210.3px;top:423px">0</div>
<div class="t" style="left:1250.3px;top:423px">0</div>
<div class="t" style="left:1290.3px;top:423px">8.5</div>
<div class="t" style="left:389.3px;top:445px;letter-spacing:0">00131</div>
<div class="t" style="left:457.3px;top:445px">Trần Thành Hiệp</div>
<div class="t" style="left:597.3px;top:445px">2020-05-07</div>
<div class="t" style="left:671.3px;top:445px">T.5</div>
<div class="t" style="left:711.3px;top:445px">07:27</div>
<div class="t" style="left:753.3px;top:445px">17:06</div>
<div class="t" style="left:795.3px;top:445px">HC</div>
<div class="t" style="left:835.3px;top:445px">0</div>
<div class="t" style="left:875.3px;top:445px">0</div>
<div class="t" style="left:915.3px;top:445px">8</div>
<div class="t" style="left:957.3px;top:445px">1</div>
<div class="t" style="left:1002.3px;top:445px">X</div>
<div class="t" style="left:1032.3px;top:445px">0</div>
<div class="t" style="left:1077.3px;top:445px">0</div>
<div class="t" style="left:1170.3px;top:445px">0.5</div>
<div class="t" style="left:1210.3px;top:445px">0</div>
<div class="t" style="left:1250.3px;top:445px">0</div>
<div class="t" style="left:1290.3px;top:445px">8.5</div>
<div class="t" style="left:389.3px;top:467px;letter-spacing:0">00131</div>
<div class="t" style="left:457.3px;top:467px">Trần Thành Hiệp</div>
<div class="t" style="left:597.3px;top:467px">2020-05-08</div>
<div class="t" style="left:671.3px;top:467px">T.6</div>
<div class="t" style="left:711.3px;top:467px">07:27</div>
<div class="t" style="left:753.3px;top:467px">17:05</div>
<div class="t" style="left:795.3px;top:467px">HC</div>
<div class="t" style="left:835.3px;top:467px">0</div>
<div class="t" style="left:875.3px;top:467px">0</div>
<div class="t" style="left:915.3px;top:467px">8</div>
<div class="t" style="left:957.3px;top:467px">1</div>
<div class="t" style="left:1002.3px;top:467px">X</div>
<div class="t" style="left:1032.3px;top:467px">0</div>
<div class="t" style="left:1077.3px;top:467px">0</div>
<div class="t" style="left:1170.3px;top:467px">0.5</div>
<div class="t" style="left:1210.3px;top:467px">0</div>
<div class="t" style="left:1250.3px;top:467px">0</div>
<div class="t" style="left:1290.3px;top:467px">8.5</div>
<div class="t" style="left:389.3px;top:489px;letter-spacing:0">00131</div>
<div class="t" style="left:457.3px;top:489px">Trần Thành Hiệp</div>
<div class="t" style="left:597.3px;top:489px">2020-05-09</div>
<div class="t" style="left:671.3px;top:489px">T.7</div>
<div class="t" style="left:711.3px;top:489px">07:16</div>
<div class="t" style="left:753.3px;top:489px">16:56</div>
<div class="t" style="left:795.3px;top:489px">HC</div>
<div class="t" style="left:835.3px;top:489px">0</div>
<div class="t" style="left:875.3px;top:489px">0</div>
<div class="t" style="left:915.3px;top:489px">8</div>
<div class="t" style="left:957.3px;top:489px">1</div>
<div class="t" style="left:1002.3px;top:489px">X</div>
<div class="t" style="left:1032.3px;top:489px">0</div>
<div class="t" style="left:1077.3px;top:489px">0</div>
<div class="t" style="left:1170.3px;top:489px">0.25</div>
<div class="t" style="left:1210.3px;top:489px">0</div>
<div class="t" style="left:1250.3px;top:489px">0</div>
<div class="t" style="left:1290.3px;top:489px">8.25</div>
<div class="t" style="left:389.3px;top:511px;letter-spacing:0">00131</div>
<div class="t" style="left:457.3px;top:511px">Trần Thành Hiệp</div>
<div class="t" style="left:597.3px;top:511px">2020-05-10</div>
<div class="t" style="left:671.3px;top:511px">CN</div>
<div class="t" style="left:795.3px;top:511px">--</div>
<div class="t" style="left:835.3px;top:511px">0</div>
<div class="t" style="left:875.3px;top:511px">0</div>
<div class="t" style="left:915.3px;top:511px">0</div>
<div class="t" style="left:957.3px;top:511px">0</div>
<div class="t" style="left:1002.3px;top:511px">--</div>
<div class="t" style="left:1032.3px;top:511px">0</div>
<div class="t" style="left:1077.3px;top:511px">0</div>
<div class="t" style="left:1170.3px;top:511px">0</div>
<div class="t" style="left:1210.3px;top:511px">0</div>
<div class="t" style="left:1250.3px;top:511px">0</div>
<div class="t" style="left:1290.3px;top:511px">0</div>
<div class="t" style="left:389.3px;top:533px;letter-spacing:0">00131</div>
<div class="t" style="left:457.3px;top:533px">Trần Thành Hiệp</div>
<div class="t" style="left:597.3px;top:533px">2020-05-11</div>
<div class="t" style="left:671.3px;top:533px">T.2</div>
<div class="t" style="left:711.3px;top:533px">07:25</div>
<div class="t" style="left:753.3px;top:533px">17:06</div>
<div class="t" style="left:795.3px;top:533px">HC</div>
<div class="t" style="left:835.3px;top:533px">0</div>
<div class="t" style="left:875.3px;top:533px">0</div>
<div class="t" style="left:915.3px;top:533px">8</div>
<div class="t" style="left:957.3px;top:533px">1</div>
<div class="t" style="left:1002.3px;top:533px">X</div>
<div class="t" style="left:1032.3px;top:533px">0</div>
<div class="t" style="left:1077.3px;top:533px">0</div>
<div class="t" style="left:1170.3px;top:533px">0.5</div>
<div class="t" style="left:1210.3px;top:533px">0</div>
<div class="t" style="left:1250.3px;top:533px">0</div>
<div class="t" style="left:1290.3px;top:533px">8.5</div>
<div class="t" style="left:389.3px;top:555px;letter-spacing:0">00131</div>
<div class="t" style="left:457.3px;top:555px">Trần Thành Hiệp</div>
<div class="t" style="left:597.3px;top:555px">2020-05-12</div>
<div class="t" style="left:671.3px;top:555px">T.3</div>
<div class="t" style="left:711.3px;top:555px">07:18</div>
<div class="t" style="left:753.3px;top:555px">17:10</div>
<div class="t" style="left:795.3px;top:555px">HC</div>
<div class="t" style="left:835.3px;top:555px">0</div>
<div class="t" style="left:875.3px;top:555px">0</div>
<div class="t" style="left:915.3px;top:555px">8</div>
<div class="t" style="left:957.3px;top:555px">1</div>
<div class="t" style="left:1002.3px;top:555px">X</div>
<div class="t" style="left:1032.3px;top:555px">0</div>
<div class="t" style="left:1077.3px;top:555px">0</div>
<div class="t" style="left:1170.3px;top:555px">0.5</div>
<div class="t" style="left:1210.3px;top:555px">0</div>
<div class="t" style="left:1250.3px;top:555px">0</div>
<div class="t" style="left:1290.3px;top:555px">8.5</div>
<div class="t" style="left:389.3px;top:577px;letter-spacing:0">00131</div>
<div class="t" style="left:457.3px;top:577px">Trần Thành Hiệp</div>
<div class="t" style="left:597.3px;top:577px">2020-05-13</div>
<div class="t" style="left:671.3px;top:577px">T.4</div>
<div class="t" style="left:711.3px;top:577px">07:24</div>
<div class="t" style="left:753.3px;top:577px">17:22</div>
<div class="t" style="left:795.3px;top:577px">HC</div>
<div class="t" style="left:835.3px;top:577px">0</div>
<div class="t" style="left:875.3px;top:577px">0</div>
<div class="t" style="left:915.3px;top:577px">8</div>
<div class="t" style="left:957.3px;top:577px">1</div>
<div class="t" style="left:1002.3px;top:577px">X</div>
<div class="t" style="left:1032.3px;top:577px">0</div>
<div class="t" style="left:1077.3px;top:577px">0</div>
<div class="t" style="left:1170.3px;top:577px">0.75</div>
<div class="t" style="left:1210.3px;top:577px">0</div>
<div class="t" style="left:1250.3px;top:577px">0</div>
<div class="t" style="left:1290.3px;top:577px">8.75</div>
<div class="t" style="left:389.3px;top:599px;letter-spacing:0">00131</div>
<div class="t" style="left:457.3px;top:599px">Trần Thành Hiệp</div>
<div class="t" style="left:597.3px;top:599px">2020-05-14</div>
<div class="t" style="left:671.3px;top:599px">T.5</div>
<div class="t" style="left:711.3px;top:599px">07:16</div>
<div class="t" style="left:753.3px;top:599px">17:29</div>
<div class="t" style="left:795.3px;top:599px">HC</div>
<div class="t" style="left:835.3px;top:599px">0</div>
<div class="t" style="left:875.3px;top:599px">0</div>
<div class="t" style="left:915.3px;top:599px">8</div>
<div class="t" style="left:957.3px;top:599px">1</div>
<div class="t" style="left:1002.3px;top:599px">X</div>
<div class="t" style="left:1032.3px;top:599px">0</div>
<div class="t" style="left:1077.3px;top:599px">0</div>
<div class="t" style="left:1170.3px;top:599px">0.75</div>
<div class="t" style="left:1210.3px;top:599px">0</div>
<div class="t" style="left:1250.3px;top:599px">0</div>
<div class="t" style="left:1290.3px;top:599px">8.75</div>
<div class="t" style="left:389.3px;top:621px;letter-spacing:0">00131</div>
<div class="t" style="left:457.3px;top:621px">Trần Thành Hiệp</div>
<div class="t" style="left:597.3px;top:621px">2020-05-15</div>
<div class="t" style="left:671.3px;top:621px">T.6</div>
<div class="t" style="left:711.3px;top:621px">07:17</div>
<div class="t" style="left:753.3px;top:621px">17:30</div>
<div class="t" style="left:795.3px;top:621px">HC</div>
<div class="t" style="left:835.3px;top:621px">0</div>
<div class="t" style="left:875.3px;top:621px">0</div>
<div class="t" style="left:915.3px;top:621px">8</div>
<div class="t" style="left:957.3px;top:621px">1</div>
<div class="t" style="left:1002.3px;top:621px">X</div>
<div class="t" style="left:1032.3px;top:621px">0</div>
<div class="t" style="left:1077.3px;top:621px">0</div>
<div class="t" style="left:1170.3px;top:621px">1</div>
<div class="t" style="left:1210.3px;top:621px">0</div>
<div class="t" style="left:1250.3px;top:621px">0</div>
<div class="t" style="left:1290.3px;top:621px">9</div>
<div class="t" style="left:389.3px;top:643px;letter-spacing:0">00131</div>
<div class="t" style="left:457.3px;top:643px">Trần Thành Hiệp</div>
<div class="t" style="left:597.3px;top:643px">2020-05-16</div>
<div class="t" style="left:671.3px;top:643px">T.7</div>
<div class="t" style="left:711.3px;top:643px">07:23</div>
<div class="t" style="left:753.3px;top:643px">17:03</div>
<div class="t" style="left:795.3px;top:643px">HC</div>
<div class="t" style="left:835.3px;top:643px">0</div>
<div class="t" style="left:875.3px;top:643px">0</div>
<div class="t" style="left:915.3px;top:643px">8</div>
<div class="t" style="left:957.3px;top:643px">1</div>
<div class="t" style="left:1002.3px;top:643px">X</div>
<div class="t" style="left:1032.3px;top:643px">0</div>
<div class="t" style="left:1077.3px;top:643px">0</div>
<div class="t" style="left:1170.3px;top:643px">0.5</div>
<div class="t" style="left:1210.3px;top:643px">0</div>
<div class="t" style="left:1250.3px;top:643px">0</div>
<div class="t" style="left:1290.3px;top:643px">8.5</div>
<div class="t" style="left:389.3px;top:665px;letter-spacing:0">00131</div>
<div class="t" style="left:457.3px;top:665px">Trần Thành Hiệp</div>
<div class="t" style="left:597.3px;top:665px">2020-05-17</div>
<div class="t" style="left:671.3px;top:665px">CN</div>
<div class="t" style="left:795.3px;top:665px">--</div>
<div class="t" style="left:835.3px;top:665px">0</div>
<div class="t" style="left:875.3px;top:665px">0</div>
<div class="t" style="left:915.3px;top:665px">0</div>
<div class="t" style="left:957.3px;top:665px">0</div>
<div class="t" style="left:1002.3px;top:665px">--</div>
<div class="t" style="left:1032.3px;top:665px">0</div>
<div class="t" style="left:1077.3px;top:665px">0</div>
<div class="t" style="left:1170.3px;top:665px">0</div>
<div class="t" style="left:1210.3px;top:665px">0</div>
<div class="t" style="left:1250.3px;top:665px">0</div>
<div class="t" style="left:1290.3px;top:665px">0</div>
<div class="t" style="left:389.3px;top:687px;letter-spacing:0">00131</div>
<div class="t" style="left:457.3px;top:687px">Trần Thành Hiệp</div>
<div class="t" style="left:597.3px;top:687px">2020-05-18</div>
<div class="t" style="left:671.3px;top:687px">T.2</div>
<div class="t" style="left:711.3px;top:687px">07:18</div>
<div class="t" style="left:753.3px;top:687px">17:33</div>
<div class="t" style="left:795.3px;top:687px">HC</div>
<div class="t" style="left:835.3px;top:687px">0</div>
<div class="t" style="left:875.3px;top:687px">0</div>
<div class="t" style="left:915.3px;top:687px">8</div>
<div class="t" style="left:957.3px;top:687px">1</div>
<div class="t" style="left:1002.3px;top:687px">X</div>
<div class="t" style="left:1032.3px;top:687px">0</div>
<div class="t" style="left:1077.3px;top:687px">0</div>
<div class="t" style="left:1170.3px;top:687px">1</div>
<div class="t" style="left:1210.3px;top:687px">0</div>
<div class="t" style="left:1250.3px;top:687px">0</div>
<div class="t" style="left:1290.3px;top:687px">9</div>
<div class="t" style="left:389.3px;top:709px;letter-spacing:0">00131</div>
<div class="t" style="left:457.3px;top:709px">Trần Thành Hiệp</div>
<div class="t" style="left:597.3px;top:709px">2020-05-19</div>
<div class="t" style="left:671.3px;top:709px">T.3</div>
<div class="t" style="left:711.3px;top:709px">07:16</div>
<div class="t" style="left:753.3px;top:709px">17:29</div>
<div class="t" style="left:795.3px;top:709px">HC</div>
<div class="t" style="left:835.3px;top:709px">0</div>
<div class="t" style="left:875.3px;top:709px">0</div>
<div class="t" style="left:915.3px;top:709px">8</div>
<div class="t" style="left:957.3px;top:709px">1</div>
<div class="t" style="left:1002.3px;top:709px">X</div>
<div class="t" style="left:1032.3px;top:709px">0</div>
<div class="t" style="left:1077.3px;top:709px">0</div>
<div class="t" style="left:1170.3px;top:709px">0.75</div>
<div class="t" style="left:1210.3px;top:709px">0</div>
<div class="t" style="left:1250.3px;top:709px">0</div>
<div class="t" style="left:1290.3px;top:709px">8.75</div>
<div class="a" style="left:8px;top:738px;width:1354px;height:4px;background:linear-gradient(#e9f0fa,#cddcf3)"></div>
<div id="status" class="a"></div>
<div class="a" style="left:7px;top:764px;width:1356px;height:1px;background:#f3f7fd"></div>
<svg style="left:20px;top:742px" width="70" height="22" viewBox="20 742 70 22">
<path d="M29 742 L76.2 742 L84 764 L23.6 764 Z" fill="#1d2636"/>
<path d="M29 742 L40 742 L34 764 L23.6 764 Z" fill="#252f42"/>
<path d="M65.8 742 L69.2 742 L80.5 764 L76 764 Z" fill="#3f86d6"/>
<path d="M69.2 742 L71 742 L82.3 764 L80.5 764 Z" fill="#16202e"/>
<ellipse cx="53.4" cy="754" rx="8.6" ry="9.4" fill="#2f3641" stroke="#8d9098" stroke-width="1.3"/>
<ellipse cx="53.4" cy="754.5" rx="5.6" ry="6.8" fill="#4a505c"/>
<path d="M50.2 764 L50.4 756 Q50.6 751.8 53.6 751.8 Q56.6 751.8 56.8 756 L57 764 Z" fill="#e4a9ac"/>
<path d="M40.5 764 Q40.8 757.8 44.5 757.8 Q48.2 757.8 48.5 764 Z" fill="#f0d9c4"/>
</svg>
<div class="a" style="left:104px;top:742px;width:2px;height:22px;border-left:1px solid #e6eefb;border-right:1px solid #7f9ccb"></div>
<div class="a" style="left:384px;top:742px;width:2px;height:22px;border-left:1px solid #e6eefb;border-right:1px solid #7f9ccb"></div>
<div class="a" style="left:524px;top:742px;width:2px;height:22px;border-left:1px solid #e6eefb;border-right:1px solid #7f9ccb"></div>
<div class="st" style="left:107px">Thứ Ba, Ngày: 2020-06-02, Giờ: 17:07:10</div>
<div class="st" style="left:387.5px">Phiên bản 8.20.5.30</div>
<svg style="left:1344px;top:747px" width="16" height="15" viewBox="0 0 16 15"><g fill="#b7cdf0"><rect x="11" y="1" width="2.2" height="2.2"/><rect x="7" y="5" width="2.2" height="2.2"/><rect x="11" y="5" width="2.2" height="2.2"/><rect x="3" y="9" width="2.2" height="2.2"/><rect x="7" y="9" width="2.2" height="2.2"/><rect x="11" y="9" width="2.2" height="2.2"/></g></svg>
</body></html>
